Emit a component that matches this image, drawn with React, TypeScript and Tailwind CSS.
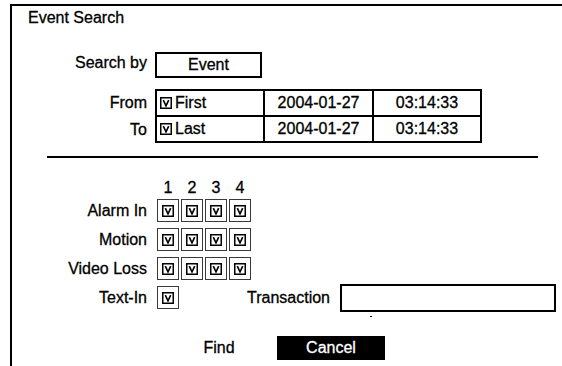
import * as React from "react";

// small boxed "V" glyph used for every check mark on this screen
function CheckGlyph() {
  return (
    <svg width="12" height="12" viewBox="0 0 12 12" className="block shrink-0">
      <rect x="0.75" y="0.75" width="10.5" height="10.5" fill="#fff" stroke="#000" strokeWidth="1.5" />
      <path d="M3.3 3.2 L6 8.8 L8.7 3.2" fill="none" stroke="#000" strokeWidth="1.6" />
    </svg>
  );
}

function CheckCell() {
  return (
    <div className="w-[22px] h-[23px] border border-[#3a3a3a] flex items-center justify-center">
      <CheckGlyph />
    </div>
  );
}

function Label({ children }: { children: React.ReactNode }) {
  return <div className="w-[135px] text-right shrink-0">{children}</div>;
}

const channelRows = [
  { label: "Alarm In", count: 4 },
  { label: "Motion", count: 4 },
  { label: "Video Loss", count: 4 },
];

export default function App() {
  return (
    <div className="w-[562px] h-[366px] bg-white overflow-hidden text-black text-[16px] leading-[18px] font-['Liberation_Sans',Arial,sans-serif] [-webkit-text-stroke:0.3px_currentColor]">
      <div className="ml-[10px] mt-[4px] h-[362px] border-l-2 border-t-2 border-black pt-[3px]">
        {/* Title */}
        <div className="pl-[16px]">Event Search</div>

        {/* Search by */}
        <div className="flex items-center mt-[25px]">
          <div className="w-[135px] shrink-0 text-right -mt-[4px]">Search by</div>
          <div className="ml-[8px] w-[107px] h-[26px] border-2 border-black flex items-center justify-center">
            Event
          </div>
        </div>

        {/* From / To */}
        <div className="flex mt-[11px]">
          <div className="w-[135px] shrink-0 flex flex-col text-right">
            <div className="h-[28px] flex items-center justify-end">From</div>
            <div className="h-[26px] flex items-center justify-end">To</div>
          </div>
          <div className="ml-[8px] w-[327px] border-2 border-black grid grid-cols-[106px_109px_108px]">
            <div className="h-[26px] flex items-center gap-[3px] pl-[3px] border-b-2 border-black">
              <CheckGlyph />
              <span>First</span>
            </div>
            <div className="h-[26px] flex items-center justify-center border-l-2 border-b-2 border-black">2004-01-27</div>
            <div className="h-[26px] flex items-center justify-center border-l-2 border-b-2 border-black">03:14:33</div>
            <div className="h-[24px] flex items-center gap-[3px] pl-[3px]">
              <CheckGlyph />
              <span>Last</span>
            </div>
            <div className="h-[24px] flex items-center justify-center border-l-2 border-black">2004-01-27</div>
            <div className="h-[24px] flex items-center justify-center border-l-2 border-black">03:14:33</div>
          </div>
        </div>

        {/* Divider */}
        <div className="ml-[35px] mt-[13px] w-[491px] h-[2px] bg-black" />

        {/* Channel numbers */}
        <div className="flex mt-[21px]">
          <div className="w-[135px] shrink-0" />
          <div className="ml-[10px] flex gap-[2px]">
            {[1, 2, 3, 4].map((n) => (
              <div key={n} className="w-[22px] text-center">{n}</div>
            ))}
          </div>
        </div>

        {/* Channel rows */}
        <div className="flex flex-col gap-[6px] mt-[2px]">
          {channelRows.map((row) => (
            <div key={row.label} className="flex items-center">
              <Label>{row.label}</Label>
              <div className="ml-[10px] flex gap-[2px]">
                {Array.from({ length: row.count }).map((_, i) => (
                  <CheckCell key={i} />
                ))}
              </div>
            </div>
          ))}
          <div className="flex items-start">
            <div className="flex items-center h-[23px]">
              <Label>Text-In</Label>
              <div className="ml-[10px]">
                <CheckCell />
              </div>
            </div>
            <div className="ml-[68px] flex flex-col -mt-[2px]">
              <div className="flex items-center">
                <span>Transaction</span>
                <div className="ml-[10px] w-[216px] h-[28px] border-2 border-black" />
              </div>
              <div className="ml-[123px] mt-[4px] w-[2px] h-[1px] bg-black" />
            </div>
          </div>
        </div>

        {/* Buttons */}
        <div className="flex items-center mt-[19px]">
          <div className="w-[191px] shrink-0" />
          <div className="w-[32px] text-center">Find</div>
          <div className="ml-[42px] w-[108px] h-[24px] bg-black text-white flex items-center justify-center">
            Cancel
          </div>
        </div>
      </div>
    </div>
  );
}
